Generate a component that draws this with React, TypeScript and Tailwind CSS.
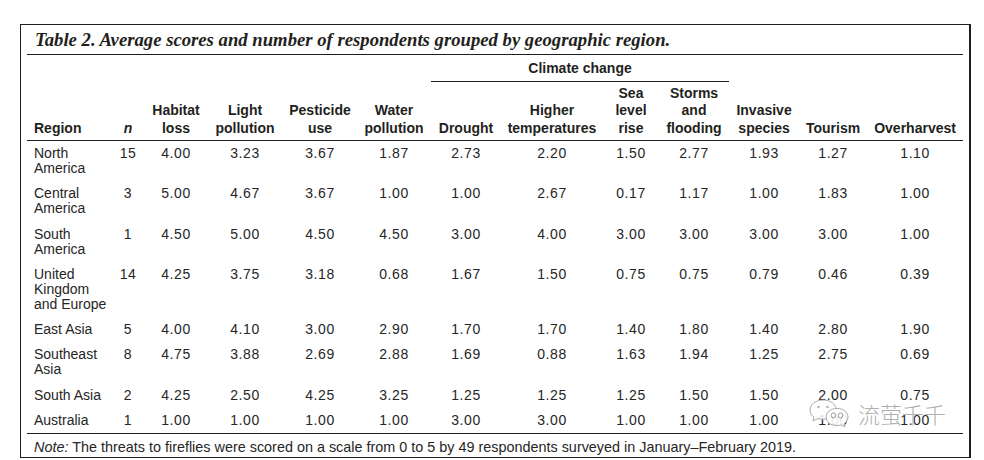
import React from 'react';

const widths = [84, 34, 62, 76, 74, 74, 70, 102, 56, 70, 70, 68, 96];

const rows: { region: string[]; n: string; values: string[] }[] = [
  { region: ['North', 'America'], n: '15', values: ['4.00', '3.23', '3.67', '1.87', '2.73', '2.20', '1.50', '2.77', '1.93', '1.27', '1.10'] },
  { region: ['Central', 'America'], n: '3', values: ['5.00', '4.67', '3.67', '1.00', '1.00', '2.67', '0.17', '1.17', '1.00', '1.83', '1.00'] },
  { region: ['South', 'America'], n: '1', values: ['4.50', '5.00', '4.50', '4.50', '3.00', '4.00', '3.00', '3.00', '3.00', '3.00', '1.00'] },
  { region: ['United', 'Kingdom', 'and Europe'], n: '14', values: ['4.25', '3.75', '3.18', '0.68', '1.67', '1.50', '0.75', '0.75', '0.79', '0.46', '0.39'] },
  { region: ['East Asia'], n: '5', values: ['4.00', '4.10', '3.00', '2.90', '1.70', '1.70', '1.40', '1.80', '1.40', '2.80', '1.90'] },
  { region: ['Southeast', 'Asia'], n: '8', values: ['4.75', '3.88', '2.69', '2.88', '1.69', '0.88', '1.63', '1.94', '1.25', '2.75', '0.69'] },
  { region: ['South Asia'], n: '2', values: ['4.25', '2.50', '4.25', '3.25', '1.25', '1.25', '1.25', '1.50', '1.50', '2.00', '0.75'] },
  { region: ['Australia'], n: '1', values: ['1.00', '1.00', '1.00', '1.00', '3.00', '3.00', '1.00', '1.00', '1.00', '1.00', '1.00'] },
];

const Lines: React.FC<{ lines: string[] }> = ({ lines }) => (
  <>
    {lines.map((l, i) => (
      <div key={i}>{l}</div>
    ))}
  </>
);

const WeChatMark: React.FC = () => (
  <div className="absolute left-[808px] top-[398px] flex items-center gap-[6px] pointer-events-none">
    <svg width="44" height="30" viewBox="0 0 44 30">
      <path
        d="M15 2 C7 2 2 7 2 12 C2 15 3.5 17.5 6 19 L5 23 L10 20.5 C11.5 21 13 21.2 15 21.2 C23 21.2 28 17 28 11.6 C28 6 22.5 2 15 2 Z"
        fill="#ffffff"
        fillOpacity="0.85"
        stroke="#a9a9a9"
        strokeWidth="1"
      />
      <circle cx="10.5" cy="9" r="1.3" fill="#b5b5b5" />
      <circle cx="19.5" cy="9" r="1.3" fill="#b5b5b5" />
      <path
        d="M29 10.5 C22.5 10.5 18 14.3 18 19 C18 23.7 22.5 27.5 29 27.5 C30.5 27.5 31.8 27.3 33 26.9 L37 29 L36.2 25.6 C38.5 24 40 21.7 40 19 C40 14.3 35.5 10.5 29 10.5 Z"
        fill="#ffffff"
        fillOpacity="0.9"
        stroke="#a9a9a9"
        strokeWidth="1"
      />
      <ellipse cx="25.5" cy="17.5" rx="2.2" ry="2.6" fill="none" stroke="#9a9a9a" strokeWidth="1" />
      <ellipse cx="32.5" cy="17.5" rx="2.2" ry="2.6" fill="none" stroke="#9a9a9a" strokeWidth="1" />
    </svg>
    <span className="text-[22px] leading-none text-[#b0b0b0] font-['Noto_Sans_CJK_SC',sans-serif] font-light [text-shadow:0_0_1px_#ffffff]">
      流萤千千
    </span>
  </div>
);

export default function App() {
  const th = "p-0 pb-[3px] font-bold text-center align-bottom";
  const td = "p-0 pt-[5px] pb-[5.3px] align-top";
  return (
    <div className="relative min-h-[460px] w-[984px] bg-white pl-[20px] pt-[24px] text-[#231f20] font-['Liberation_Sans',Arial,sans-serif]">
      <div className="w-[951px] h-[434px] border border-r-2 border-[#1e1e1e] px-[6px]">
        <div className="border-b border-[#1e1e1e] pl-[8px] pt-[3px] pb-[2px] text-[18.7px] leading-[24px] italic font-semibold font-['Liberation_Serif','Times_New_Roman',serif]">
          Table 2. Average scores and number of respondents grouped by geographic region.
        </div>
        <table className="table-fixed border-collapse w-[936px]">
          <colgroup>
            {widths.map((w, i) => (
              <col key={i} style={{ width: w }} />
            ))}
          </colgroup>
          <thead className="text-[14px] leading-[17.5px]">
            <tr>
              <th rowSpan={2} className={`${th} text-left pl-[7px]`}>Region</th>
              <th rowSpan={2} className={`${th} italic`}>n</th>
              <th rowSpan={2} className={th}><Lines lines={['Habitat', 'loss']} /></th>
              <th rowSpan={2} className={th}><Lines lines={['Light', 'pollution']} /></th>
              <th rowSpan={2} className={th}><Lines lines={['Pesticide', 'use']} /></th>
              <th rowSpan={2} className={th}><Lines lines={['Water', 'pollution']} /></th>
              <th colSpan={4} className="p-0 pt-[5px] pb-[3px] font-bold text-center border-b border-[#1e1e1e]">Climate change</th>
              <th rowSpan={2} className={th}><Lines lines={['Invasive', 'species']} /></th>
              <th rowSpan={2} className={th}>Tourism</th>
              <th rowSpan={2} className={th}>Overharvest</th>
            </tr>
            <tr className="border-b border-[#1e1e1e]">
              <th className={th}>Drought</th>
              <th className={th}><Lines lines={['Higher', 'temperatures']} /></th>
              <th className={`${th} pt-[3px]`}><Lines lines={['Sea', 'level', 'rise']} /></th>
              <th className={`${th} pt-[3px]`}><Lines lines={['Storms', 'and', 'flooding']} /></th>
            </tr>
          </thead>
          <tbody className="text-[14px] leading-[15px] text-[#262626]">
            {rows.map((r, i) => (
              <tr key={i} className={i === rows.length - 1 ? 'border-b border-[#1e1e1e]' : ''}>
                <td className={`${td} pl-[7px]`}>
                  <Lines lines={r.region} />
                </td>
                <td className={`${td} text-center tracking-[0.04em]`}>{r.n}</td>
                {r.values.map((v, j) => (
                  <td key={j} className={`${td} text-center tracking-[0.04em]`}>
                    {v}
                  </td>
                ))}
              </tr>
            ))}
          </tbody>
        </table>
        <div className="pl-[7px] pt-[6px] text-[14.4px] leading-[15px] text-[#262626]">
          <span className="italic">Note:</span> The threats to fireflies were scored on a scale from 0 to 5 by 49 respondents surveyed in January–February 2019.
        </div>
      </div>
      <WeChatMark />
    </div>
  );
}
